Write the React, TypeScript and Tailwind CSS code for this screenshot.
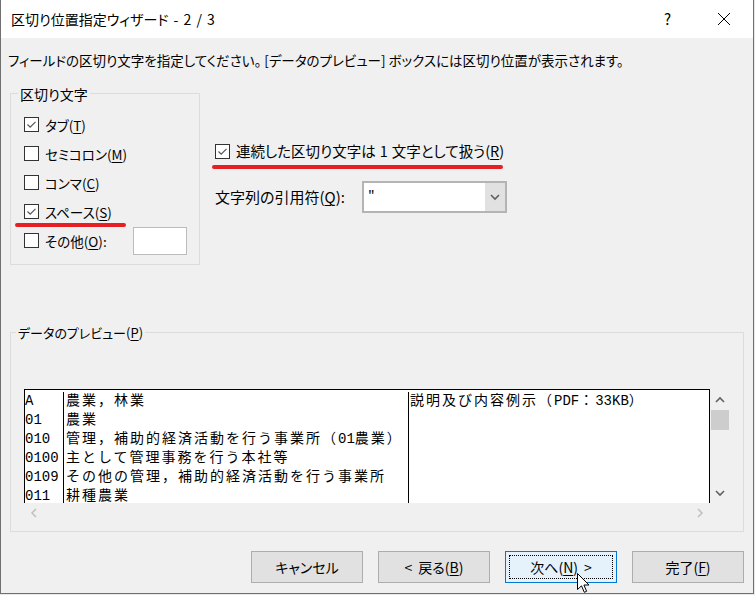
import React from "react";

type Delimiter = { label: string; key: string; checked?: boolean; marked?: boolean };

const delimiters: Delimiter[] = [
  { label: "タブ", key: "T", checked: true },
  { label: "セミコロン", key: "M" },
  { label: "コンマ", key: "C" },
  { label: "スペース", key: "S", checked: true, marked: true },
];

const previewRows: [string, string, string][] = [
  ["A", "農業，林業", "説明及び内容例示（PDF：33KB）"],
  ["01", "農業", ""],
  ["010", "管理，補助的経済活動を行う事業所（01農業）", ""],
  ["0100", "主として管理事務を行う本社等", ""],
  ["0109", "その他の管理，補助的経済活動を行う事業所", ""],
  ["011", "耕種農業", ""],
];

function Key({ k }: { k: string }) {
  return (
    <>
      (<span className="underline underline-offset-[2px] decoration-1">{k}</span>)
    </>
  );
}

// half-width runs get no extra tracking, like a fixed-pitch preview font
function PreviewText({ text }: { text: string }) {
  const runs = text.match(/[\x20-\x7e]+|[^\x20-\x7e]+/g) || [];
  return (
    <>
      {runs.map((r, i) =>
        /^[\x20-\x7e]+$/.test(r) ? (
          <span key={i} className="tracking-[0px]">
            {r}
          </span>
        ) : (
          <span key={i} className="tracking-[2px]">
            {r}
          </span>
        )
      )}
    </>
  );
}

function CheckBox({ checked }: { checked?: boolean }) {
  return (
    <span className="w-[15px] h-[15px] border border-[#333333] bg-white flex items-center justify-center shrink-0">
      {checked && (
        <svg width="11" height="11" viewBox="0 0 11 11">
          <path d="M1.5 5.5 L4.2 8.2 L9.5 2.8" fill="none" stroke="#555555" strokeWidth="1.2" />
        </svg>
      )}
    </span>
  );
}

function Chevron({ dir, color }: { dir: "up" | "down" | "left" | "right"; color: string }) {
  const d =
    dir === "up"
      ? "M1 6 L5 2 L9 6"
      : dir === "down"
        ? "M1 2 L5 6 L9 2"
        : dir === "left"
          ? "M6 1 L2 5 L6 9"
          : "M2 1 L6 5 L2 9";
  const w = dir === "up" || dir === "down" ? 10 : 8;
  const h = dir === "up" || dir === "down" ? 8 : 10;
  return (
    <svg width={w} height={h} viewBox={`0 0 ${w} ${h}`}>
      <path d={d} fill="none" stroke={color} strokeWidth="1.6" />
    </svg>
  );
}

export default function App() {
  return (
    <div className="w-[755px] h-[595px] bg-[#e8e8e8] relative overflow-hidden text-[14px] text-black font-['Noto_Sans_CJK_JP',sans-serif] [font-feature-settings:'palt']">
      <div className="w-[754px] h-[594px] border-l border-r border-b border-[#707070] bg-[#f0f0f0] flex flex-col">
        {/* Title bar */}
        <div className="h-[38px] bg-white flex items-center shrink-0">
          <span className="ml-[10px] text-[14px] [word-spacing:2px]">区切り位置指定ウィザード - 2 / 3</span>
          <span className="ml-auto text-[15px]">?</span>
          <svg className="ml-[46px] mr-[22px]" width="14" height="14" viewBox="0 0 14 14">
            <path d="M1 1 L13 13 M13 1 L1 13" stroke="#000" strokeWidth="1" />
          </svg>
        </div>

        <p className="mt-[12px] ml-[7px] leading-[20px] text-[13.5px]">
          フィールドの区切り文字を指定してください。 [データのプレビュー] ボックスには区切り位置が表示されます。
        </p>

        <div className="flex mt-[23px]">
          {/* Delimiter group */}
          <div className="relative ml-[9px] w-[190px] h-[172px] border border-[#dcdcdc] pt-[16px] pl-[13px]">
            <span className="absolute -top-[10px] left-[7px] px-[2px] bg-[#f0f0f0] leading-[20px]">区切り文字</span>
            {delimiters.map((d) => (
              <div key={d.key} className="relative h-[29px] flex items-center gap-[6px] text-[13.5px]">
                <CheckBox checked={d.checked} />
                <span className="leading-[20px]">
                  {d.label}
                  <Key k={d.key} />
                </span>
                {d.marked && (
                  <span className="absolute left-[-9px] top-[26px] w-[111px] h-[4px] rounded-full bg-[#e81e25]" />
                )}
              </div>
            ))}
            <div className="h-[29px] flex items-center gap-[6px] text-[13.5px]">
              <CheckBox />
              <span className="leading-[20px]">
                その他
                <Key k="O" />:
              </span>
              <span className="ml-auto mr-[12px] w-[54px] h-[28px] border border-[#bcbcbc] bg-white" />
            </div>
          </div>

          {/* Right options */}
          <div className="ml-[15px] mt-[48px] flex flex-col">
            <div className="relative h-[20px] flex items-center gap-[6px] text-[14.5px]">
              <CheckBox checked />
              <span className="leading-[20px]">
                連続した区切り文字は<span className="mx-[4px]">1</span>文字として扱う
                <Key k="R" />
              </span>
              <span className="absolute left-[-3px] top-[24px] w-[291px] h-[4px] rounded-full bg-[#e81e25]" />
            </div>
            <div className="mt-[20px] flex items-center">
              <span className="w-[147px] leading-[20px] text-[15px]">
                文字列の引用符
                <Key k="Q" />:
              </span>
              <div className="w-[145px] h-[32px] border-2 border-[#b4b4b4] bg-white flex">
                <span className="pl-[4px] leading-[20px] pt-[2px]">"</span>
                <span className="ml-auto w-[20px] bg-[#e1e1e1] flex items-center justify-center">
                  <Chevron dir="down" color="#606060" />
                </span>
              </div>
            </div>
          </div>
        </div>

        {/* Preview group */}
        <div className="relative mt-[67px] ml-[9px] w-[734px] h-[200px] border border-[#dcdcdc] pt-[56px] pl-[13px]">
          <span className="absolute -top-[10px] left-[5px] px-[2px] bg-[#f0f0f0] leading-[20px] text-[13px]">
            データのプレビュー
            <Key k="P" />
          </span>
          <div className="flex">
            <div className="w-[686px] h-[114px] border-l border-t border-r border-black bg-white overflow-hidden text-[14px] leading-[19px] font-['Liberation_Mono','Noto_Sans_CJK_JP',monospace] [font-feature-settings:normal]">
              {previewRows.map((r, i) => (
                <div key={r[0]} className={`flex whitespace-nowrap ${i === 0 ? "h-[21px] pt-[2px]" : "h-[19px]"}`}>
                  <span className="w-[39px] border-r border-black overflow-hidden">{r[0]}</span>
                  <span className="w-[345px] border-r border-black pl-[2px] overflow-hidden">
                    <PreviewText text={r[1]} />
                  </span>
                  <span className="w-[300px] pl-[1px] overflow-hidden">
                    <PreviewText text={r[2]} />
                  </span>
                </div>
              ))}
            </div>
            <div className="w-[20px] h-[114px] flex flex-col">
              <span className="h-[21px] flex items-center justify-center">
                <Chevron dir="up" color="#606060" />
              </span>
              <span className="h-[20px] mx-[1px] bg-[#cdcdcd]" />
              <span className="flex-1" />
              <span className="h-[21px] flex items-center justify-center">
                <Chevron dir="down" color="#606060" />
              </span>
            </div>
          </div>
          <div className="w-[686px] h-[20px] flex items-center justify-between px-[6px]">
            <Chevron dir="left" color="#c1c1c1" />
            <Chevron dir="right" color="#c1c1c1" />
          </div>
        </div>

        {/* Buttons */}
        <div className="mt-[19px] flex justify-end gap-[15px] pr-[9px]">
          <button className="w-[112px] h-[32px] border border-[#adadad] bg-[#e1e1e1]">キャンセル</button>
          <button className="w-[112px] h-[32px] border border-[#adadad] bg-[#e1e1e1]">
            &lt;<span className="ml-[6px]">戻る</span>
            <Key k="B" />
          </button>
          <button className="w-[112px] h-[32px] border border-[#0078d7] bg-[#e5f1fb] p-[3px]">
            <span className="w-full h-full border border-dotted border-black flex items-center justify-center">
              次へ
              <Key k="N" />
              <span className="ml-[6px]">&gt;</span>
            </span>
          </button>
          <button className="w-[112px] h-[32px] border border-[#adadad] bg-[#e1e1e1]">
            完了
            <Key k="F" />
          </button>
        </div>
      </div>

      {/* Mouse pointer */}
      <svg className="absolute left-[577px] top-[573px]" width="13" height="21" viewBox="0 0 13 21">
        <path
          d="M0.5 0.5 L0.5 16.5 L4.5 12.8 L7.3 19.3 L9.6 18.3 L6.9 12 L12 12 Z"
          fill="#fff"
          stroke="#000"
          strokeWidth="1"
          strokeLinejoin="round"
        />
      </svg>
    </div>
  );
}
